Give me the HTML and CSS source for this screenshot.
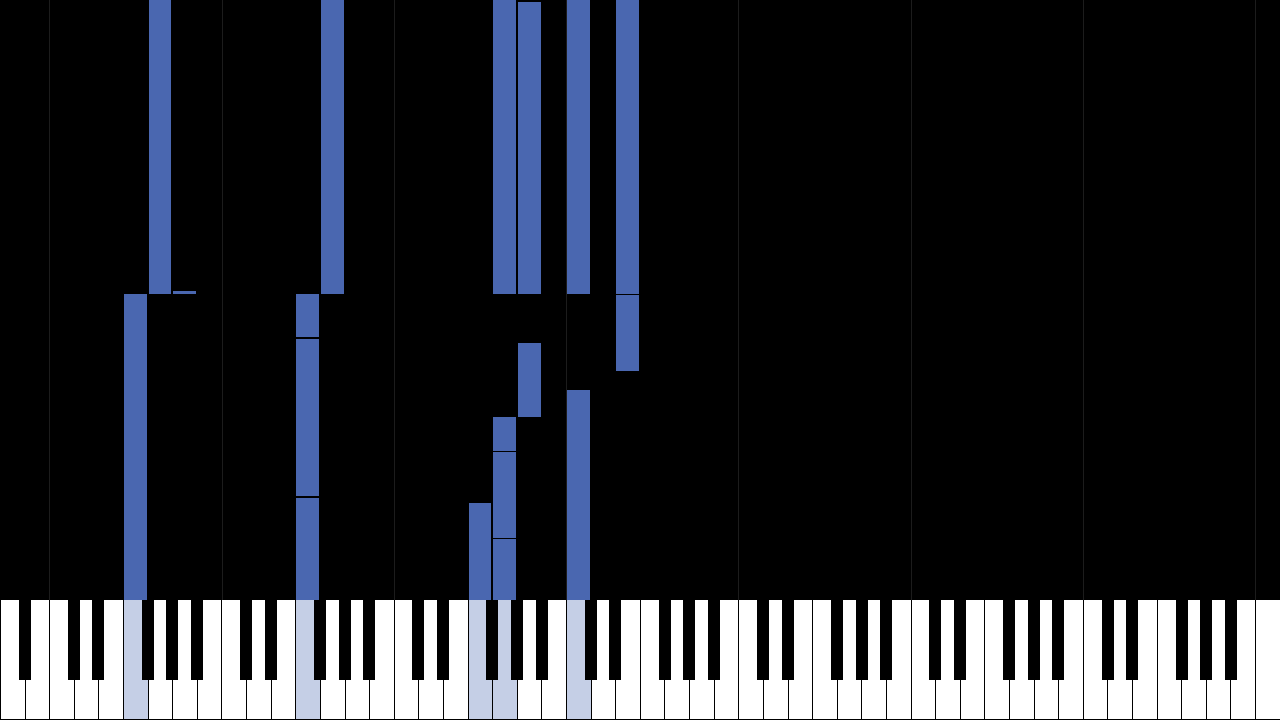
FILE: index.html
```html
<!DOCTYPE html>
<html lang="en">
<head>
  <meta charset="UTF-8">
  <meta name="viewport" content="width=device-width, initial-scale=1">
  <title>Piano Roll</title>
  <link rel="stylesheet" href="styles.css">
</head>
<body>
  <div class="player">
    <div class="roll" id="roll"></div>
    <div class="keyboard" id="keyboard"></div>
  </div>

  <script>
    // 88 keys: A0..C8 -> 52 white keys
    const WHITE = 52;
    const W = 1280 / WHITE;

    // white key index, top, bottom (px on the roll)
    const notes = [
      [5, 294, 600],
      [6, 0, 294],
      [7, 291, 294],
      [12, 294, 337], [12, 339, 496], [12, 498, 600],
      [13, 0, 294],
      [19, 503, 600],
      [20, 0, 294], [20, 417, 451], [20, 452, 538], [20, 539, 600],
      [21, 2, 294], [21, 343, 417],
      [23, 0, 294], [23, 390, 600],
      [25, 0, 294], [25, 295, 371]
    ];

    const roll = document.getElementById("roll");
    const keyboard = document.getElementById("keyboard");

    // octave lines on every C
    for (let i = 2; i < WHITE; i += 7) {
      const line = document.createElement("div");
      line.className = "octave-line";
      line.style.left = (i * W) + "px";
      roll.appendChild(line);
    }

    notes.forEach(n => {
      const bar = document.createElement("div");
      bar.className = "note";
      bar.style.left = (n[0] * W + 1) + "px";
      bar.style.width = (W - 2) + "px";
      bar.style.top = n[1] + "px";
      bar.style.height = (n[2] - n[1]) + "px";
      roll.appendChild(bar);
    });

    // keys that are sounding right now (touching the keyboard)
    const active = new Set(notes.filter(n => n[2] >= 600).map(n => n[0]));

    for (let i = 0; i < WHITE; i++) {
      const key = document.createElement("div");
      key.className = "white-key" + (active.has(i) ? " active" : "");
      keyboard.appendChild(key);
    }

    // black keys sit after A, C, D, F, G (cycle starts on A0)
    for (let i = 0; i < WHITE - 1; i++) {
      if ([0, 2, 3, 5, 6].includes(i % 7)) {
        const key = document.createElement("div");
        key.className = "black-key";
        key.style.left = ((i + 1) * W - 6) + "px";
        keyboard.appendChild(key);
      }
    }
  </script>
</body>
</html>
```

FILE: styles.css
```css
body {
  margin: 0;
  padding: 0;
  background: #000;
  overflow: hidden;
}
.player {
  width: 1280px;
  height: 720px;
  display: flex;
  flex-direction: column;
}
.roll {
  position: relative;
  height: 600px;
  background: #000;
  overflow: hidden;
}
.octave-line {
  position: absolute;
  top: 0;
  width: 1px;
  height: 100%;
  background: #1c1c1c;
}
.note {
  position: absolute;
  background: #4a67b0;
}
.keyboard {
  position: relative;
  height: 120px;
  display: flex;
  background: #000;
  padding-bottom: 1px;
  box-sizing: border-box;
}
.white-key {
  flex: 1;
  background: #fff;
  border-left: 1px solid #000;
}
.white-key.active {
  background: #c5cfe6;
}
.black-key {
  position: absolute;
  top: 0;
  width: 12px;
  height: 80px;
  background: #000;
}
```
